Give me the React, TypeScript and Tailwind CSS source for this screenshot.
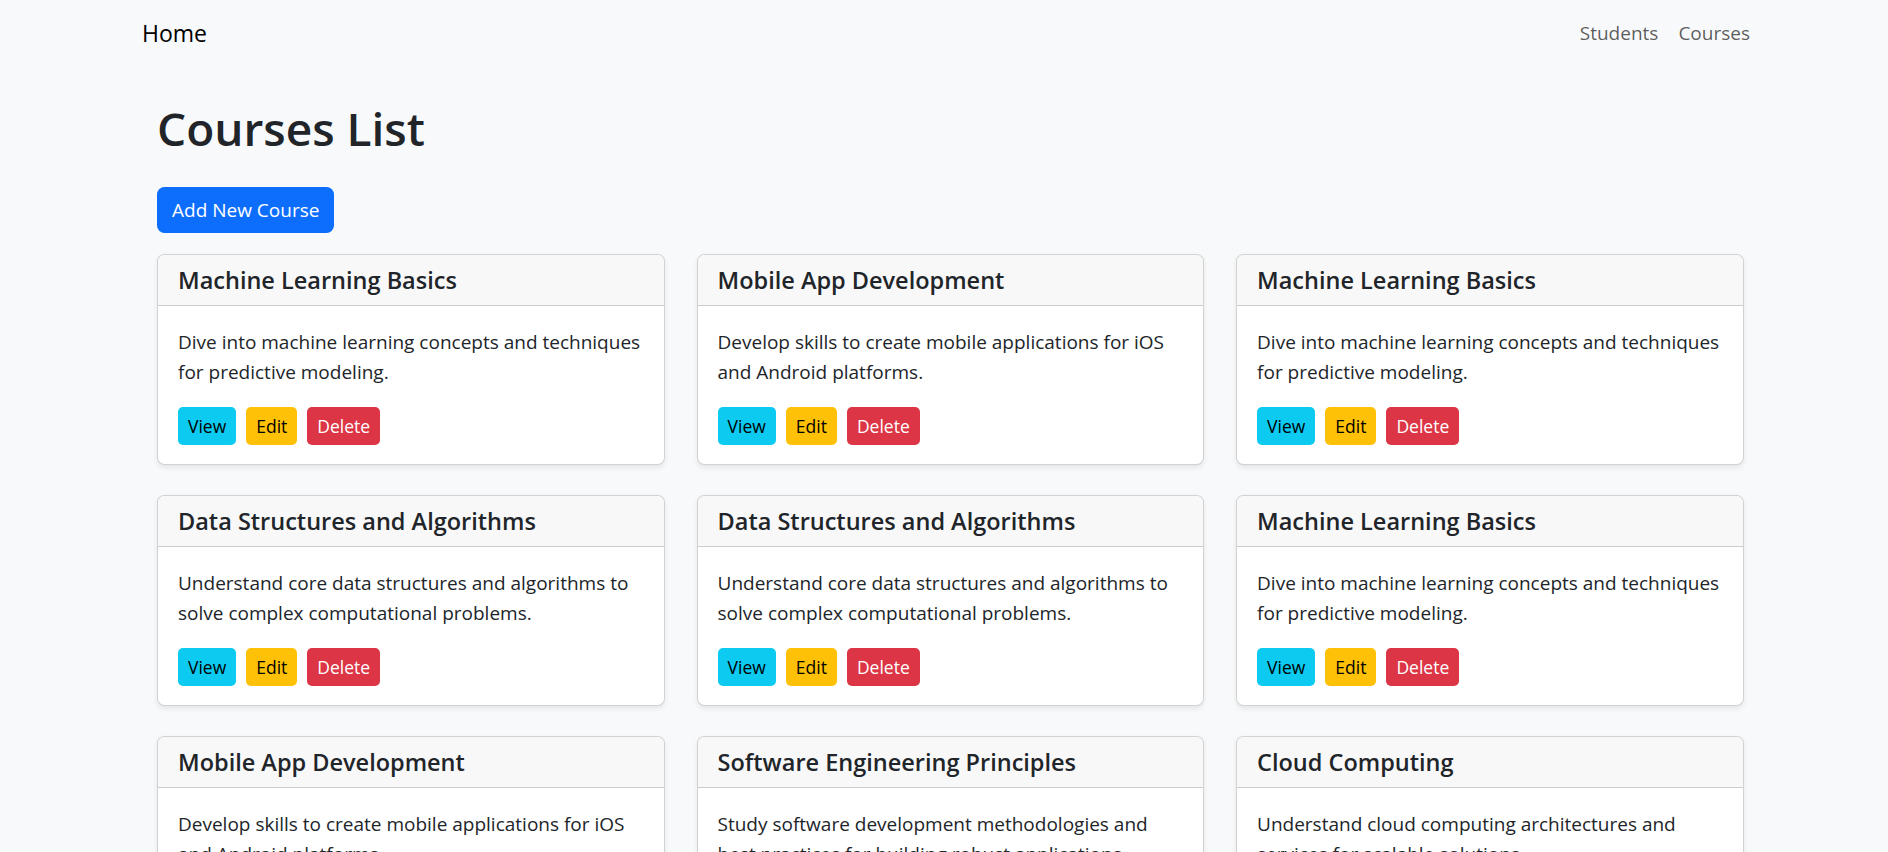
import React from "react";

interface Course {
  title: string;
  description: string;
}

const courses: Course[] = [
  {
    title: "Machine Learning Basics",
    description: "Dive into machine learning concepts and techniques for predictive modeling.",
  },
  {
    title: "Mobile App Development",
    description: "Develop skills to create mobile applications for iOS and Android platforms.",
  },
  {
    title: "Machine Learning Basics",
    description: "Dive into machine learning concepts and techniques for predictive modeling.",
  },
  {
    title: "Data Structures and Algorithms",
    description: "Understand core data structures and algorithms to solve complex computational problems.",
  },
  {
    title: "Data Structures and Algorithms",
    description: "Understand core data structures and algorithms to solve complex computational problems.",
  },
  {
    title: "Machine Learning Basics",
    description: "Dive into machine learning concepts and techniques for predictive modeling.",
  },
  {
    title: "Mobile App Development",
    description: "Develop skills to create mobile applications for iOS and Android platforms.",
  },
  {
    title: "Software Engineering Principles",
    description: "Study software development methodologies and best practices for building robust applications.",
  },
  {
    title: "Cloud Computing",
    description: "Understand cloud computing architectures and services for scalable solutions.",
  },
];

const CourseCard: React.FC<{ course: Course }> = ({ course }) => {
  return (
    <div className="bg-white border border-black/[0.175] rounded-[7.5px] shadow-[0_2.5px_5px_rgba(0,0,0,0.075)] overflow-hidden">
      <div className="bg-[#f8f8f9] border-b border-black/[0.175] px-5 py-[10px]">
        <h5 className="text-[23.5px] leading-[30px] font-semibold text-[#212529]">{course.title}</h5>
      </div>
      <div className="px-5 pt-[21px] pb-[19px]">
        <p className="text-[19px] leading-[30px] text-[#212529] mb-5">{course.description}</p>
        <div className="flex gap-[10px]">
          <button className="h-[38px] px-[10px] rounded-[5px] bg-[#0dcaf0] text-black text-[17.5px] leading-[26px]">
            View
          </button>
          <button className="h-[38px] px-[10px] rounded-[5px] bg-[#ffc107] text-black text-[17.5px] leading-[26px]">
            Edit
          </button>
          <button className="h-[38px] px-[10px] rounded-[5px] bg-[#dc3545] text-white text-[17.5px] leading-[26px]">
            Delete
          </button>
        </div>
      </div>
    </div>
  );
};

export default function App() {
  return (
    <div className="min-h-screen bg-[#f8f9fa] text-[#212529] font-['Open_Sans',sans-serif]">
      {/* Navbar */}
      <nav className="h-[66px] flex items-center justify-between pl-[142px] pr-[138px]">
        <a className="text-[23px] text-black">Home</a>
        <div className="flex gap-[20px] text-[19px] text-black/65">
          <a>Students</a>
          <a>Courses</a>
        </div>
      </nav>

      <main className="ml-[157px] w-[1587px] pt-[32px]">
        <h1 className="text-[46px] leading-[60px] font-semibold mb-[29px]">Courses List</h1>
        <button className="h-[46px] px-[15px] rounded-[7.5px] bg-[#0d6efd] text-white text-[19px] mb-[21px]">
          Add New Course
        </button>
        <div className="grid grid-cols-3 gap-x-[31.6px] gap-y-[30px]">
          {courses.map((course, i) => (
            <CourseCard key={i} course={course} />
          ))}
        </div>
      </main>
    </div>
  );
}
